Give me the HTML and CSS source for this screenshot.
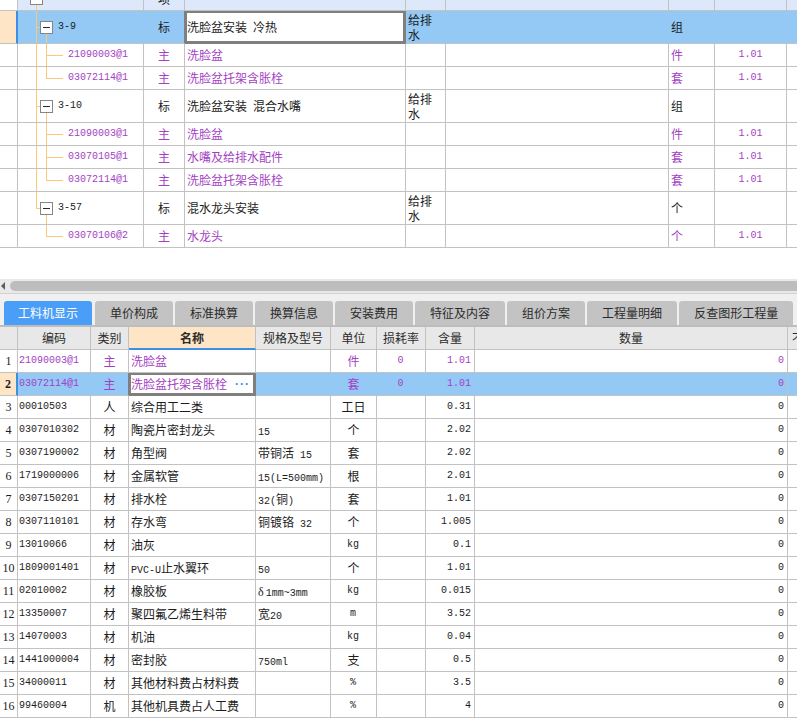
FILE: index.html
```html
<!DOCTYPE html>
<html lang="zh-CN">
<head>
<meta charset="utf-8">
<title>工料机显示</title>
<link rel="stylesheet" href="styles.css">
</head>
<body>
<div class="top">
  <div class="tt">
    <div class="r hd">
      <div class="c rn"></div>
      <div class="c tree t-root"><span class="box up"></span></div>
      <div class="c ctr"><span class="up2">项</span></div>
      <div class="c"></div><div class="c"></div><div class="c"></div><div class="c"></div><div class="c"></div><div class="c"></div>
    </div>
    <div class="r par sel">
      <div class="c rn"></div>
      <div class="c tree t-par"><span class="box"></span><span class="m code">3-9</span></div>
      <div class="c ctr pe">标</div>
      <div class="c edit">洗脸盆安装<span class="m"> </span>冷热</div>
      <div class="c wrap">给排<br>水</div>
      <div class="c"></div>
      <div class="c">组</div>
      <div class="c"></div>
      <div class="c"></div>
    </div>
    <div class="r ch p">
      <div class="c rn"></div>
      <div class="c tree t-ch"><span class="m">21090003@1</span></div>
      <div class="c ctr">主</div>
      <div class="c">洗脸盆</div>
      <div class="c"></div><div class="c"></div>
      <div class="c">件</div>
      <div class="c ctr m">1.01</div>
      <div class="c"></div>
    </div>
    <div class="r ch p">
      <div class="c rn"></div>
      <div class="c tree t-chl"><span class="m">03072114@1</span></div>
      <div class="c ctr">主</div>
      <div class="c">洗脸盆托架含胀栓</div>
      <div class="c"></div><div class="c"></div>
      <div class="c">套</div>
      <div class="c ctr m">1.01</div>
      <div class="c"></div>
    </div>
    <div class="r par">
      <div class="c rn"></div>
      <div class="c tree t-par"><span class="box"></span><span class="m code">3-10</span></div>
      <div class="c ctr">标</div>
      <div class="c">洗脸盆安装<span class="m"> </span>混合水嘴</div>
      <div class="c wrap">给排<br>水</div>
      <div class="c"></div>
      <div class="c">组</div>
      <div class="c"></div>
      <div class="c"></div>
    </div>
    <div class="r ch p">
      <div class="c rn"></div>
      <div class="c tree t-ch"><span class="m">21090003@1</span></div>
      <div class="c ctr">主</div>
      <div class="c">洗脸盆</div>
      <div class="c"></div><div class="c"></div>
      <div class="c">件</div>
      <div class="c ctr m">1.01</div>
      <div class="c"></div>
    </div>
    <div class="r ch p">
      <div class="c rn"></div>
      <div class="c tree t-ch"><span class="m">03070105@1</span></div>
      <div class="c ctr">主</div>
      <div class="c">水嘴及给排水配件</div>
      <div class="c"></div><div class="c"></div>
      <div class="c">套</div>
      <div class="c ctr m">1.01</div>
      <div class="c"></div>
    </div>
    <div class="r ch p">
      <div class="c rn"></div>
      <div class="c tree t-chl"><span class="m">03072114@1</span></div>
      <div class="c ctr">主</div>
      <div class="c">洗脸盆托架含胀栓</div>
      <div class="c"></div><div class="c"></div>
      <div class="c">套</div>
      <div class="c ctr m">1.01</div>
      <div class="c"></div>
    </div>
    <div class="r par">
      <div class="c rn"></div>
      <div class="c tree t-parl"><span class="box"></span><span class="m code">3-57</span></div>
      <div class="c ctr">标</div>
      <div class="c">混水龙头安装</div>
      <div class="c wrap">给排<br>水</div>
      <div class="c"></div>
      <div class="c">个</div>
      <div class="c"></div>
      <div class="c"></div>
    </div>
    <div class="r ch p">
      <div class="c rn"></div>
      <div class="c tree t-chx"><span class="m">03070106@2</span></div>
      <div class="c ctr">主</div>
      <div class="c">水龙头</div>
      <div class="c"></div><div class="c"></div>
      <div class="c">个</div>
      <div class="c ctr m">1.01</div>
      <div class="c"></div>
    </div>
  </div>
</div>

<div class="hscroll"><span class="arrow"></span><span class="thumb"></span></div>

<div class="tabs">
  <div class="tab on">工料机显示</div>
  <div class="tab">单价构成</div>
  <div class="tab">标准换算</div>
  <div class="tab">换算信息</div>
  <div class="tab">安装费用</div>
  <div class="tab">特征及内容</div>
  <div class="tab">组价方案</div>
  <div class="tab">工程量明细</div>
  <div class="tab">反查图形工程量</div>
</div>
<div class="sep"></div>

<div class="bt">
  <div class="r hd">
    <div class="c rn"></div>
    <div class="c ctr">编码</div>
    <div class="c ctr">类别</div>
    <div class="c ctr hn">名称</div>
    <div class="c ctr">规格及型号</div>
    <div class="c ctr">单位</div>
    <div class="c ctr">损耗率</div>
    <div class="c ctr">含量</div>
    <div class="c ctr">数量</div>
    <div class="c xt">不含税市场价</div>
  </div>
  <div class="r p">
    <div class="c rn">1</div><div class="c m">21090003@1</div><div class="c ctr">主</div><div class="c">洗脸盆</div><div class="c"></div><div class="c ctr">件</div><div class="c ctr m">0</div><div class="c rt m">1.01</div><div class="c rt m">0</div><div class="c"></div>
  </div>
  <div class="r p sel">
    <div class="c rn">2</div><div class="c m">03072114@1</div><div class="c ctr pe">主</div><div class="c edit ed2"><span>洗脸盆托架含胀栓</span><span class="dots">···</span></div><div class="c"></div><div class="c ctr">套</div><div class="c ctr m">0</div><div class="c rt m">1.01</div><div class="c rt m keep">0</div><div class="c"></div>
  </div>
  <div class="r">
    <div class="c rn">3</div><div class="c m">00010503</div><div class="c ctr">人</div><div class="c">综合用工二类</div><div class="c"></div><div class="c ctr">工日</div><div class="c ctr m"></div><div class="c rt m">0.31</div><div class="c rt m">0</div><div class="c"></div>
  </div>
  <div class="r">
    <div class="c rn">4</div><div class="c m">0307010302</div><div class="c ctr">材</div><div class="c">陶瓷片密封龙头</div><div class="c"><span class="m">15</span></div><div class="c ctr">个</div><div class="c ctr m"></div><div class="c rt m">2.02</div><div class="c rt m">0</div><div class="c"></div>
  </div>
  <div class="r">
    <div class="c rn">5</div><div class="c m">0307190002</div><div class="c ctr">材</div><div class="c">角型阀</div><div class="c">带铜活<span class="m"> 15</span></div><div class="c ctr">套</div><div class="c ctr m"></div><div class="c rt m">2.02</div><div class="c rt m">0</div><div class="c"></div>
  </div>
  <div class="r">
    <div class="c rn">6</div><div class="c m">1719000006</div><div class="c ctr">材</div><div class="c">金属软管</div><div class="c"><span class="m">15(L=500mm)</span></div><div class="c ctr">根</div><div class="c ctr m"></div><div class="c rt m">2.01</div><div class="c rt m">0</div><div class="c"></div>
  </div>
  <div class="r">
    <div class="c rn">7</div><div class="c m">0307150201</div><div class="c ctr">材</div><div class="c">排水栓</div><div class="c"><span class="m">32(</span>铜<span class="m">)</span></div><div class="c ctr">套</div><div class="c ctr m"></div><div class="c rt m">1.01</div><div class="c rt m">0</div><div class="c"></div>
  </div>
  <div class="r">
    <div class="c rn">8</div><div class="c m">0307110101</div><div class="c ctr">材</div><div class="c">存水弯</div><div class="c">铜镀铬<span class="m"> 32</span></div><div class="c ctr">个</div><div class="c ctr m"></div><div class="c rt m">1.005</div><div class="c rt m">0</div><div class="c"></div>
  </div>
  <div class="r">
    <div class="c rn">9</div><div class="c m">13010066</div><div class="c ctr">材</div><div class="c">油灰</div><div class="c"></div><div class="c ctr m">kg</div><div class="c ctr m"></div><div class="c rt m">0.1</div><div class="c rt m">0</div><div class="c"></div>
  </div>
  <div class="r">
    <div class="c rn">10</div><div class="c m">1809001401</div><div class="c ctr">材</div><div class="c"><span class="m">PVC-U</span>止水翼环</div><div class="c"><span class="m">50</span></div><div class="c ctr">个</div><div class="c ctr m"></div><div class="c rt m">1.01</div><div class="c rt m">0</div><div class="c"></div>
  </div>
  <div class="r">
    <div class="c rn">11</div><div class="c m">02010002</div><div class="c ctr">材</div><div class="c">橡胶板</div><div class="c"><span class="dl">δ</span><span class="m">1mm~3mm</span></div><div class="c ctr m">kg</div><div class="c ctr m"></div><div class="c rt m">0.015</div><div class="c rt m">0</div><div class="c"></div>
  </div>
  <div class="r">
    <div class="c rn">12</div><div class="c m">13350007</div><div class="c ctr">材</div><div class="c">聚四氟乙烯生料带</div><div class="c">宽<span class="m">20</span></div><div class="c ctr m">m</div><div class="c ctr m"></div><div class="c rt m">3.52</div><div class="c rt m">0</div><div class="c"></div>
  </div>
  <div class="r">
    <div class="c rn">13</div><div class="c m">14070003</div><div class="c ctr">材</div><div class="c">机油</div><div class="c"></div><div class="c ctr m">kg</div><div class="c ctr m"></div><div class="c rt m">0.04</div><div class="c rt m">0</div><div class="c"></div>
  </div>
  <div class="r">
    <div class="c rn">14</div><div class="c m">1441000004</div><div class="c ctr">材</div><div class="c">密封胶</div><div class="c"><span class="m">750ml</span></div><div class="c ctr">支</div><div class="c ctr m"></div><div class="c rt m">0.5</div><div class="c rt m">0</div><div class="c"></div>
  </div>
  <div class="r">
    <div class="c rn">15</div><div class="c m">34000011</div><div class="c ctr">材</div><div class="c">其他材料费占材料费</div><div class="c"></div><div class="c ctr m">%</div><div class="c ctr m"></div><div class="c rt m">3.5</div><div class="c rt m">0</div><div class="c"></div>
  </div>
  <div class="r">
    <div class="c rn">16</div><div class="c m">99460004</div><div class="c ctr">机</div><div class="c">其他机具费占人工费</div><div class="c"></div><div class="c ctr m">%</div><div class="c ctr m"></div><div class="c rt m">4</div><div class="c rt m">0</div><div class="c"></div>
  </div>
</div>
</body>
</html>
```

FILE: styles.css
```css
:root {
  --grid: #c2c2c2;
  --sel: #94c9f6;
  --orange: #fde5c6;
  --blue: #3b8fe6;
  --tl: #fdc777;
  --purple: #a43fc4;
}

* { box-sizing: border-box; }

html, body { margin: 0; padding: 0; background: #fff; }

body {
  width: 797px;
  height: 728px;
  overflow: hidden;
  font-family: "Noto Sans CJK SC", "Noto Sans", sans-serif;
  font-size: 12px;
  color: #1c1c1c;
}

.m { font-family: "Liberation Mono", monospace; font-size: 10px; }
.p { color: var(--purple); }

/* ---------- top tree table ---------- */
.top { height: 279px; overflow: hidden; }

.r { display: grid; }

.tt .r { grid-template-columns: 18px 126px 41px 221px 40px 223px 46px 72px 60px; }

.c {
  border-right: 1px solid var(--grid);
  border-bottom: 1px solid var(--grid);
  white-space: nowrap;
  overflow: hidden;
  padding: 0 2px;
}

.ctr { text-align: center; }
.rt { text-align: right; padding-right: 3px; }

.tt .hd { height: 11px; }
.tt .hd .c { background-color: #dde9fb; }
.tt .hd .c.rn { background-color: #fff; }
.up2 { display: block; line-height: 12px; margin-top: -7px; }

.par { height: 33px; line-height: 32px; }
.ch { height: 23px; line-height: 22px; }

.wrap { line-height: 15px; padding-top: 1px; white-space: normal; }

.tree { display: flex; align-items: center; padding: 0; }

.box {
  flex: none;
  width: 13px;
  height: 13px;
  border: 1px solid #858585;
  background: #fff linear-gradient(#2a2a2a, #2a2a2a) center / 7px 1px no-repeat;
}

.code { margin-left: 5px; color: #1c1c1c; }

.t-root {
  align-items: flex-start;
  padding-left: 12px;
  background-image: linear-gradient(var(--tl), var(--tl));
  background-position: 18px 100%;
  background-size: 1px 5px;
  background-repeat: no-repeat;
}
.box.up { margin-top: -8px; }

.t-par, .t-parl {
  padding-left: 22px;
  background-image:
    linear-gradient(var(--tl), var(--tl)),
    linear-gradient(var(--tl), var(--tl)),
    linear-gradient(var(--tl), var(--tl));
  background-repeat: no-repeat;
  background-position: 18px 0, 18px 50%, 28px 100%;
  background-size: 1px 100%, 4px 1px, 1px 50%;
}
.t-parl { background-size: 1px 50%, 4px 1px, 1px 50%; }

.t-ch, .t-chl {
  padding-left: 50px;
  background-image:
    linear-gradient(var(--tl), var(--tl)),
    linear-gradient(var(--tl), var(--tl)),
    linear-gradient(var(--tl), var(--tl));
  background-repeat: no-repeat;
  background-position: 18px 0, 28px 0, 28px 50%;
  background-size: 1px 100%, 1px 100%, 17px 1px;
}
.t-chl { background-size: 1px 100%, 1px 50%, 17px 1px; }

.t-chx {
  padding-left: 50px;
  background-image:
    linear-gradient(var(--tl), var(--tl)),
    linear-gradient(var(--tl), var(--tl));
  background-repeat: no-repeat;
  background-position: 28px 0, 28px 50%;
  background-size: 1px 50%, 17px 1px;
}

/* selection */
.sel .c { background-color: var(--sel); border-right-color: var(--sel); }
.sel .c.rn { background-color: var(--orange); border-right: 2px solid var(--blue); }
.sel .c.pe { border-right-color: #7f7f7f; }
.sel .c.keep { border-right-color: var(--grid); }
.sel .c.edit {
  background-color: #fff;
  border-right-color: #7f7f7f;
  border-bottom-color: #7f7f7f;
  box-shadow: inset 0 0 0 2px #7f7f7f;
}

/* ---------- scrollbar ---------- */
.hscroll {
  height: 15px;
  background: #e9e9e9;
  border-bottom: 1px solid #d2d2d2;
  display: flex;
  align-items: center;
}
.arrow {
  flex: none;
  margin-left: 1px;
  width: 0;
  height: 0;
  border-top: 4px solid transparent;
  border-bottom: 4px solid transparent;
  border-right: 4px solid #5e5e5e;
}
.thumb {
  flex: 1;
  height: 10px;
  margin-left: 5px;
  background: #bdbdbd;
  border-radius: 5px 0 0 5px;
}

/* ---------- tabs ---------- */
.tabs {
  height: 31px;
  padding: 7px 0 0 4px;
  background: #f0f0f0;
  display: flex;
  gap: 2px;
  overflow: hidden;
}
.tab {
  flex: none;
  height: 24px;
  line-height: 24px;
  padding: 0 15px;
  background: #c3c3c3;
  border-radius: 3px 3px 0 0;
  color: #2b2b2b;
  font-size: 12px;
}
.tab.on { background: #4a9ef8; color: #fff; padding: 0 14px; margin-right: 1px; }

.sep { height: 2px; background: #bdbdbd; }

/* ---------- bottom table ---------- */
.bt { overflow: hidden; }
.bt .r {
  grid-template-columns: 18px 73px 38px 127px 75px 46px 49px 49px 313px 60px;
  height: 23px;
  line-height: 22px;
}
.bt .hd .c { background-color: #e8e8e8; color: #2b2b2b; }
.bt .hd .c.hn {
  background-color: var(--orange);
  font-weight: bold;
  border-bottom: 2px solid var(--blue);
  line-height: 21px;
}
.bt .hd .xt { padding-left: 4px; }

.bt .rn {
  padding: 0;
  text-align: center;
  font-family: "Liberation Serif", serif;
  font-size: 12px;
  color: #1c1c1c;
}
.bt .sel .rn { font-weight: bold; }

.bt .c.m { padding-left: 1px; }
.bt .c.rt { padding-right: 3px; }

.ed2 { display: flex; justify-content: space-between; align-items: center; padding: 0 2px 0 2px; }
.dots {
  color: var(--blue);
  font-family: "Liberation Sans", sans-serif;
  font-weight: bold;
  font-size: 12px;
  letter-spacing: 1px;
  margin-right: 3px;
}
.dl { font-family: "Liberation Serif", serif; font-size: 12px; margin-right: 2px; }
```
